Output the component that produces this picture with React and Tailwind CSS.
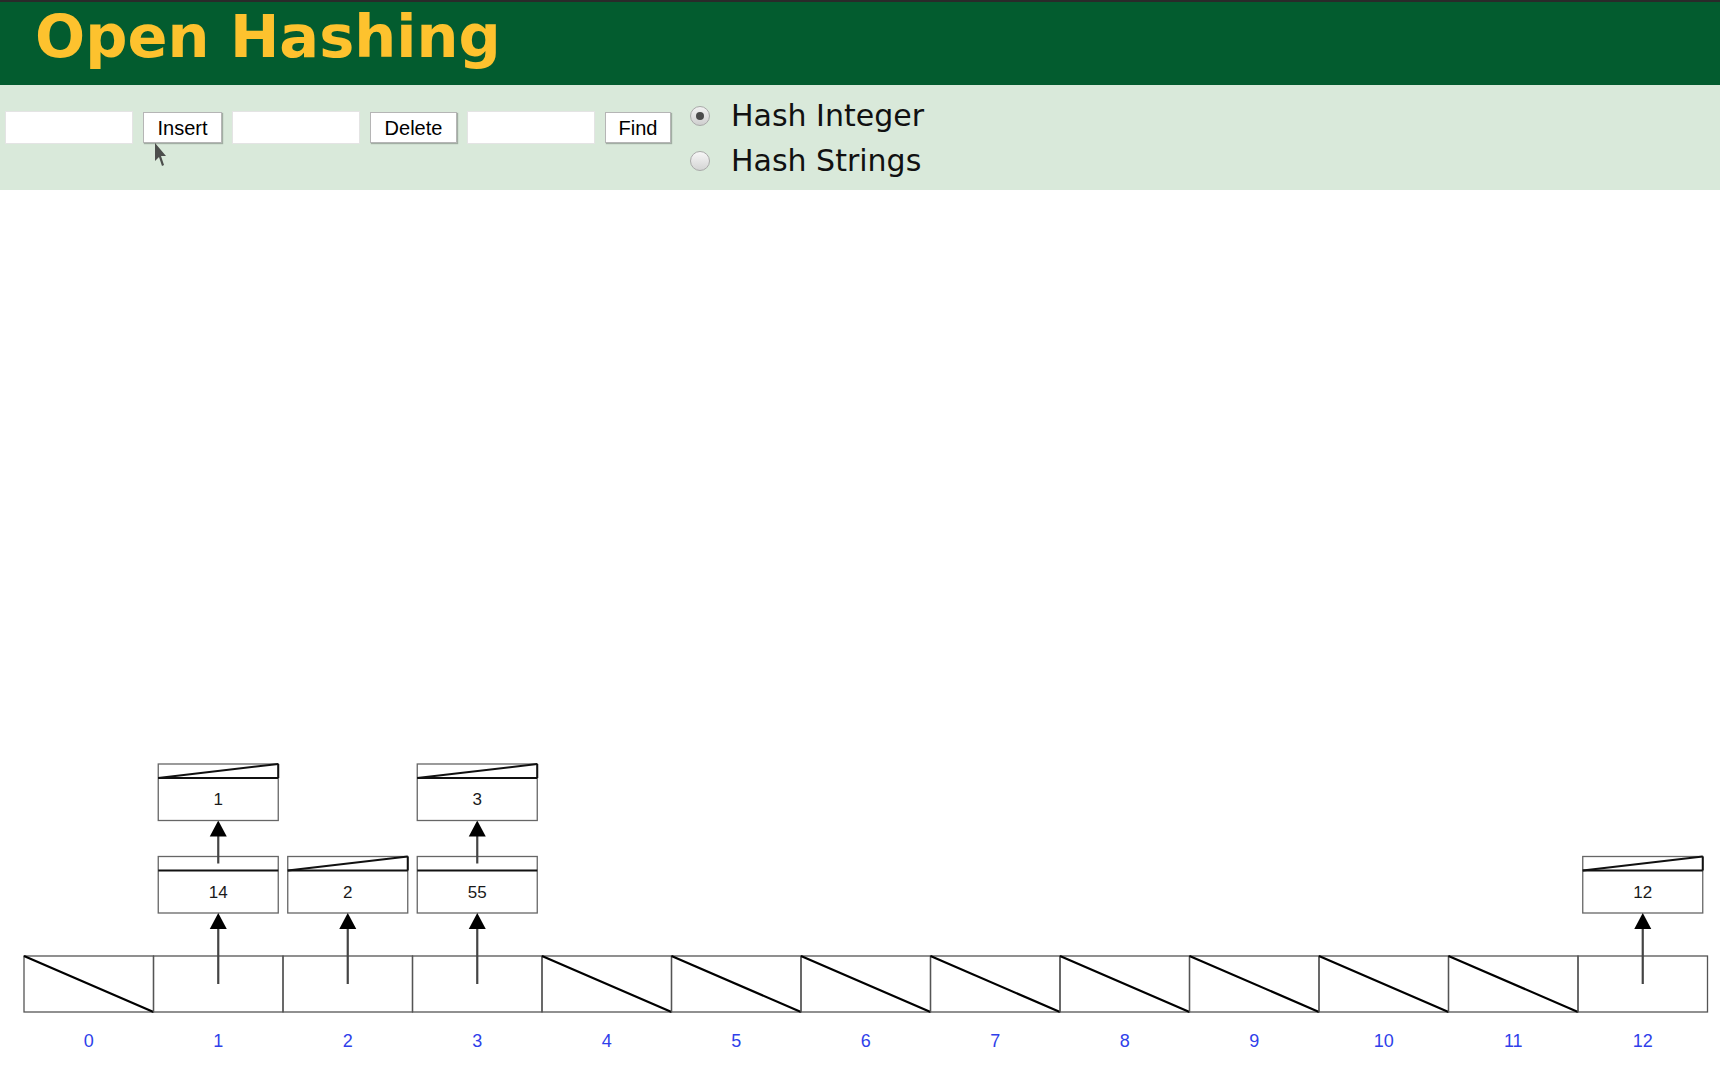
import React from 'react'

const CELL_W = 129.5
const X0 = 24
const CELL_TOP = 956
const CELL_H = 56
const NODE_W = 120
const PTR_H = 14
const VAL_H = 42.5
const ROW0_TOP = 856.5
const ROW_GAP = 92.5

const chains = { 1: [14, 1], 2: [2], 3: [55, 3], 12: [12] }

const Arrow = ({ x, from, tip }) => (
  <g>
    <line x1={x} y1={from} x2={x} y2={tip + 14} stroke="#444" strokeWidth="2.2" />
    <polygon points={`${x},${tip} ${x - 8.5},${tip + 16} ${x + 8.5},${tip + 16}`} fill="#000" />
  </g>
)

const HashDiagram = () => {
  const cells = Array.from({ length: 13 }, (_, i) => i)
  return (
    <svg viewBox="0 190 1720 881" width="1720" height="881" className="block">
      {cells.map((i) => {
        const x = X0 + i * CELL_W
        const cx = x + CELL_W / 2
        const chain = chains[i]
        return (
          <g key={i}>
            <rect x={x} y={CELL_TOP} width={CELL_W} height={CELL_H} fill="none" stroke="#555" strokeWidth="1.3" />
            {!chain && <line x1={x} y1={CELL_TOP} x2={x + CELL_W} y2={CELL_TOP + CELL_H} stroke="#000" strokeWidth="2.2" />}
            <text x={cx} y={1047} textAnchor="middle" fontSize="18" fill="#2f3fea" fontFamily="'Liberation Sans', Arial, sans-serif">
              {i}
            </text>
            {chain &&
              chain.map((v, k) => {
                const top = ROW0_TOP - k * ROW_GAP
                const nx = cx - NODE_W / 2
                const last = k === chain.length - 1
                return (
                  <g key={k}>
                    <rect x={nx} y={top} width={NODE_W} height={PTR_H + VAL_H} fill="#fff" stroke="#666" strokeWidth="1.3" />
                    <line x1={nx} y1={top + PTR_H} x2={nx + NODE_W} y2={top + PTR_H} stroke="#111" strokeWidth="2.2" />
                    {last && <line x1={nx} y1={top + PTR_H} x2={nx + NODE_W} y2={top} stroke="#111" strokeWidth="2" />}
                    {last && <line x1={nx + NODE_W} y1={top} x2={nx + NODE_W} y2={top + PTR_H} stroke="#111" strokeWidth="2" />}
                    <text x={cx} y={top + PTR_H + VAL_H / 2 + 6} textAnchor="middle" fontSize="17" fill="#1a1a1a" fontFamily="'Liberation Sans', Arial, sans-serif">
                      {v}
                    </text>
                    {!last && <Arrow x={cx} from={top + PTR_H / 2} tip={top - ROW_GAP + PTR_H + VAL_H} />}
                  </g>
                )
              })}
            {chain && <Arrow x={cx} from={CELL_TOP + CELL_H / 2} tip={ROW0_TOP + PTR_H + VAL_H} />}
          </g>
        )
      })}
    </svg>
  )
}

const TextBox = () => <input type="text" className="h-[33px] w-[128px] border border-[#e4e4e4] bg-white px-1 outline-none" />

const Btn = ({ children, w }) => (
  <button className={`h-[31px] border border-[#b5b5b5] bg-white text-[20px] leading-none text-black shadow-[1px_1px_1px_rgba(0,0,0,0.25)] ${w}`} style={{ fontFamily: "'Liberation Sans', Arial, sans-serif" }}>
    {children}
  </button>
)

const Radio = ({ checked, label }) => (
  <label className="flex h-[45px] items-center gap-[21px]">
    <span className={`flex h-[20px] w-[20px] items-center justify-center rounded-full border border-[#a9a9a9] ${checked ? 'bg-linear-to-b from-[#f2f2f2] to-[#cfcfcf]' : 'bg-linear-to-b from-[#f7f7f7] to-[#d4d4d4]'}`}>
      {checked && <span className="h-[8px] w-[8px] rounded-full bg-[#4a4a4a]" />}
    </span>
    <span className="text-[30px] leading-none text-[#111]">{label}</span>
  </label>
)

export default function App() {
  return (
    <div className="relative w-[1720px] bg-white" style={{ fontFamily: "'DejaVu Sans', Verdana, sans-serif" }}>
      <header className="h-[85px] border-t-2 border-[#2a2a2a] bg-[#035c2f] pl-[35px] pt-[5px]">
        <h1 className="text-[59px] font-bold leading-none text-[#fdc22e]">Open Hashing</h1>
      </header>

      <div className="flex h-[105px] items-start bg-[#d9e9da] pl-[5px]">
        <div className="mt-[26px] flex items-center gap-[10px]">
          <TextBox />
          <Btn w="w-[79px]">Insert</Btn>
          <TextBox />
          <Btn w="w-[87px]">Delete</Btn>
          <TextBox />
          <Btn w="w-[66px]">Find</Btn>
        </div>
        <div className="ml-[19px] mt-[8px] flex flex-col">
          <Radio checked label="Hash Integer" />
          <Radio label="Hash Strings" />
        </div>
      </div>

      <HashDiagram />

      {/* mouse pointer over the Insert button */}
      <svg className="absolute left-[153px] top-[142px]" width="14" height="26" viewBox="0 0 14 26">
        <path d="M2 1 L2 19 L6 15 L9 24 L11 23 L8 14 L13 14 Z" fill="#333" opacity="0.85" />
      </svg>
    </div>
  )
}
